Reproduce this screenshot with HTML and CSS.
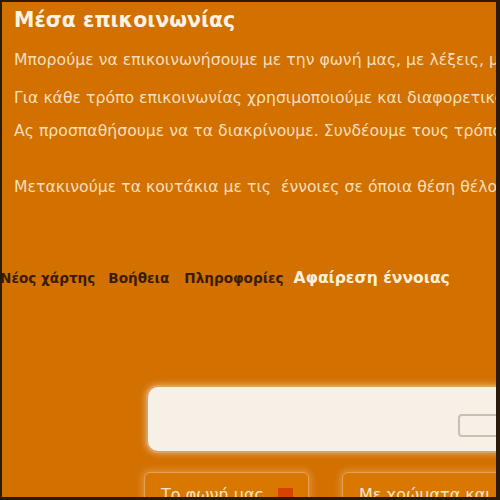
FILE: index.html
```html
<!DOCTYPE html>
<html lang="el">
<head>
<meta charset="utf-8">
<link rel="stylesheet" href="styles.css">
</head>
<body>
<div class="page">
  <div class="intro">
    <h1 class="title">Μέσα επικοινωνίας</h1>
    <p class="line l1">Μπορούμε να επικοινωνήσουμε με την φωνή μας, με λέξεις, με εικόνες</p>
    <p class="line l2">Για κάθε τρόπο επικοινωνίας χρησιμοποιούμε και διαφορετικό μέσο</p>
    <p class="line">Ας προσπαθήσουμε να τα διακρίνουμε. Συνδέουμε τους τρόπους με τα μέσα</p>
    <p class="line gap">Μετακινούμε τα κουτάκια με τις&nbsp; έννοιες σε όποια θέση θέλουμε</p>
  </div>
  <nav class="menu">
    <span class="item">Νέος χάρτης</span>
    <span class="item">Βοήθεια</span>
    <span class="item">Πληροφορίες</span>
    <span class="item active">Αφαίρεση έννοιας</span>
  </nav>
  <div class="canvas">
    <div class="topbox"><div class="field"></div></div>
    <div class="cards">
      <div class="card"><span>Το φωνή μας</span><i class="mark"></i></div>
      <div class="card wide"><span>Με χρώματα και</span></div>
    </div>
  </div>
</div>
</body>
</html>
```
FILE: styles.css
```css
html, body { margin: 0; padding: 0; background: #2a1a0c; }
body { width: 500px; height: 500px; overflow: hidden; }
.page {
  margin: 2px 4px 0 2px;
  height: 495px;
  background: #d27000;
  overflow: hidden;
  font-family: "DejaVu Sans", Verdana, sans-serif;
  color: #f4dfbd;
}
.intro { padding: 6px 0 0 12px; }
.title { margin: 0 0 18px; font-size: 20.5px; line-height: 24px; font-weight: bold; color: #fcf3e4; }
.line { margin: 0 0 15px; font-size: 15.7px; line-height: 20px; white-space: nowrap; }
.line.l1 { margin-bottom: 18px; }
.line.l2 { margin-bottom: 13px; }
.line.gap { margin-top: 36px; }
.menu { display: flex; align-items: baseline; margin: 71px 0 0 -2px; font-weight: bold; font-size: 13.6px; line-height: 20px; white-space: nowrap; }
.item { color: #3a1c05; margin-right: 13px; }
.item:nth-child(2) { margin-right: 15px; }
.item:nth-child(3) { margin-right: 10px; }
.item.active { color: #fbf0dc; font-size: 15.6px; }
.canvas { margin-top: 99px; padding-left: 146px; }
.topbox {
  height: 64px; background: #f7f0e6; border-radius: 10px 0 0 10px;
  box-shadow: 0 0 0 2px #dea060, 0 0 6px 3px #e5a35e;
  position: relative;
}
.field { position: absolute; left: 310px; top: 27px; width: 60px; height: 19px; border: 2px solid #c8c0b4; border-radius: 4px; }
.cards { display: flex; gap: 33px; margin-top: 21px; margin-left: -4px; }
.card {
  flex: 0 0 auto;
  width: 165px; height: 60px; border: 1px solid #e5a055; border-radius: 6px; box-sizing: border-box;
  background: #d97800; box-shadow: 0 0 6px 3px #e08a30; display: flex; align-items: flex-start; padding: 12px 16px 0; gap: 14px;
  font-size: 16px; color: #f7e6cc; line-height: 20px; white-space: nowrap;
}
.card.wide { width: 200px; }
.mark { width: 15px; height: 14px; background: #d44400; display: inline-block; margin-top: 3px; flex: 0 0 auto; }
```
